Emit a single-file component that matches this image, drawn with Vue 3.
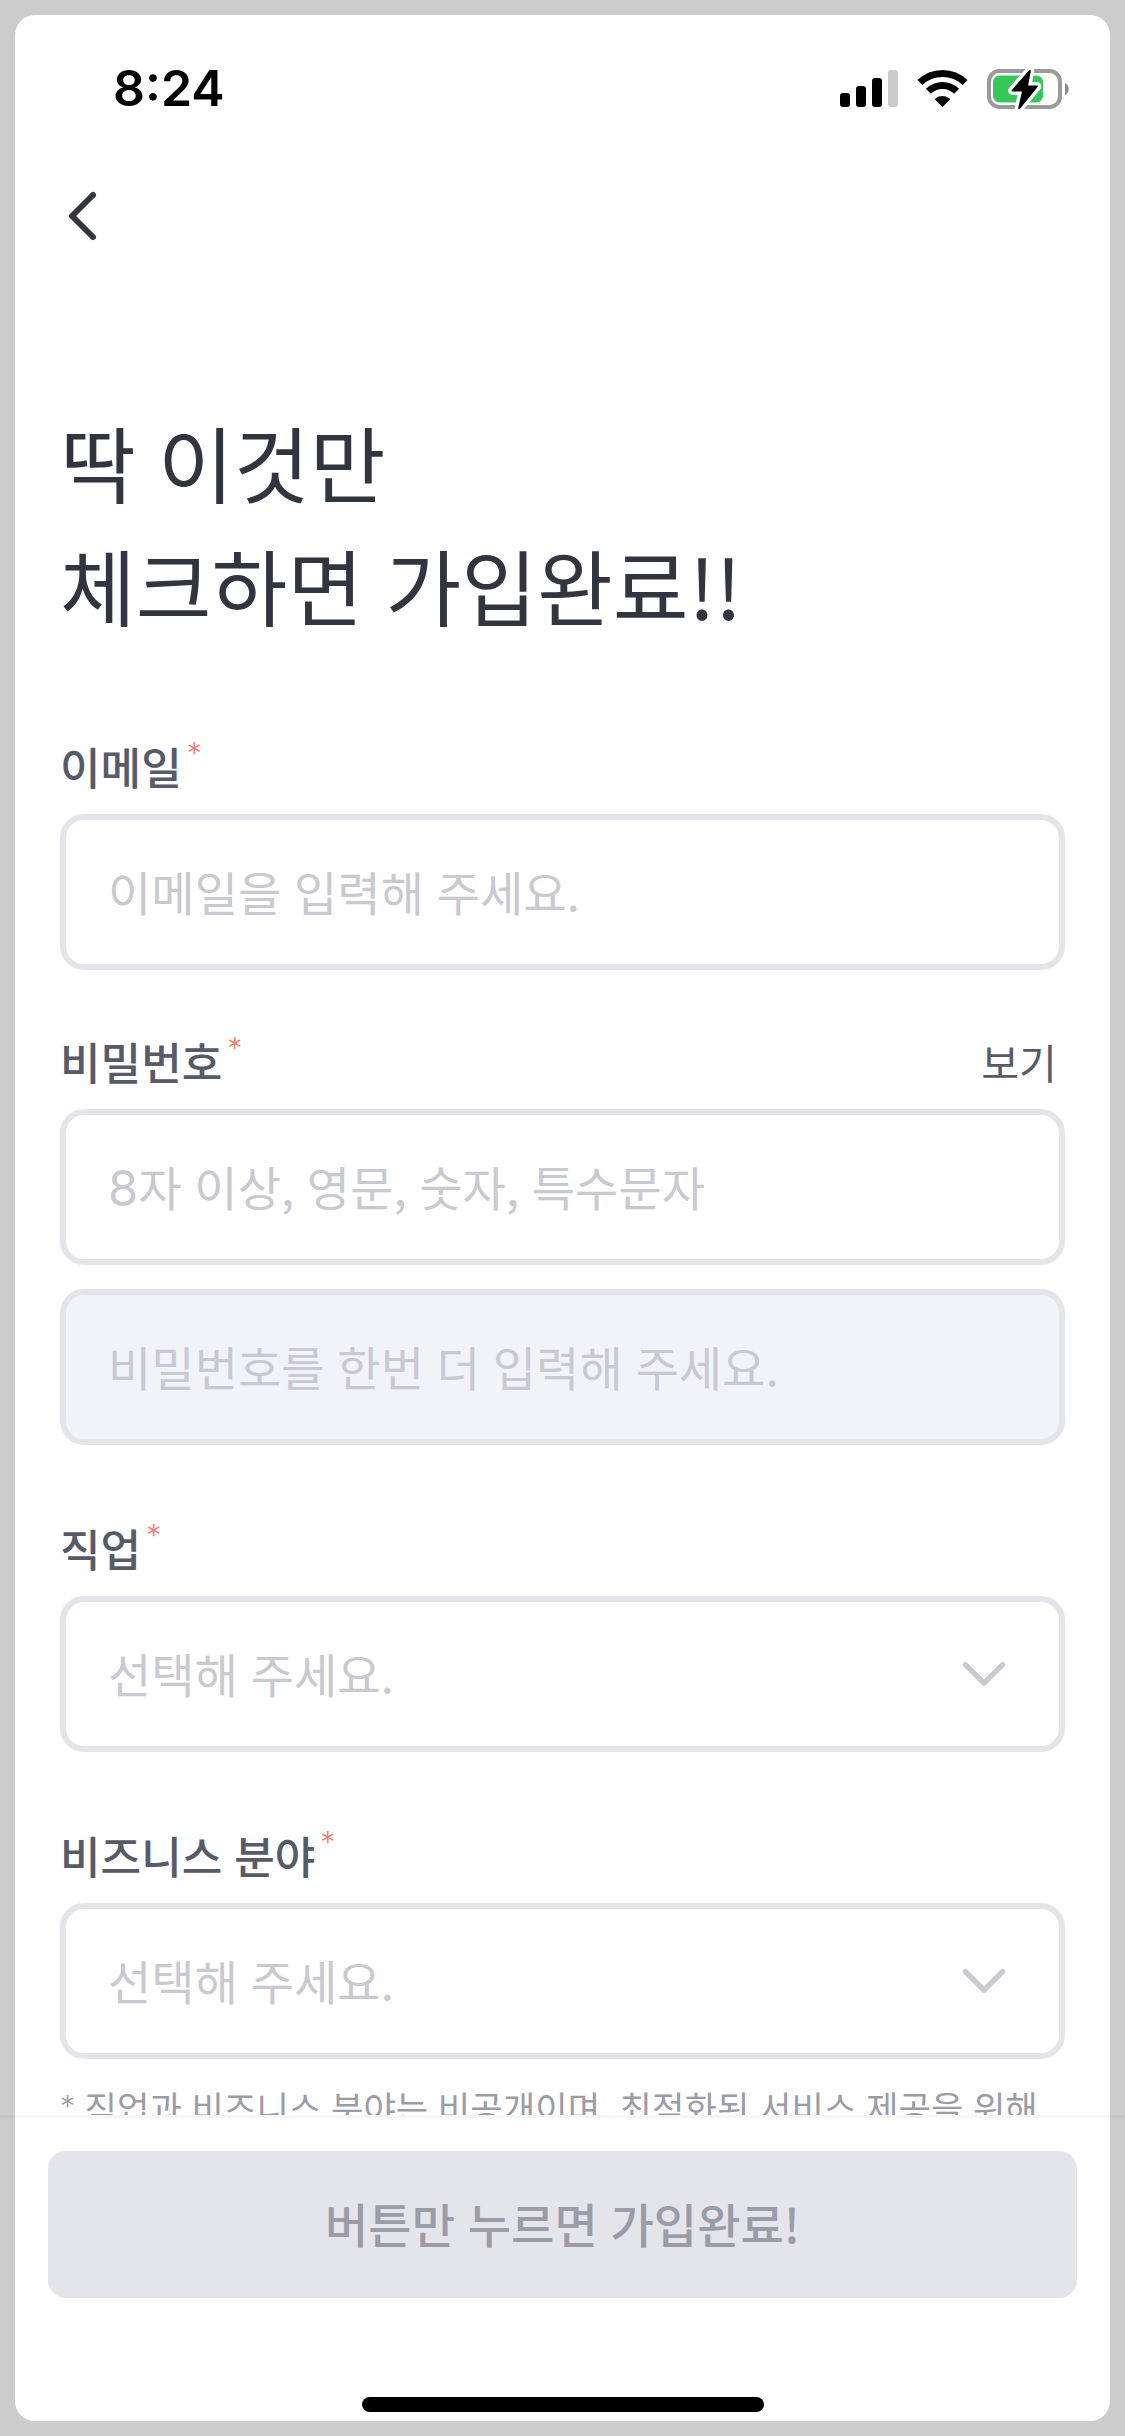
<script setup>
const fields = [
  { label: '이메일', boxes: [{ hint: '이메일을 입력해 주세요.' }] },
  {
    label: '비밀번호',
    action: '보기',
    boxes: [
      { lead: '8', hint: '자 이상, 영문, 숫자, 특수문자' },
      { hint: '비밀번호를 한번 더 입력해 주세요.', disabled: true },
    ],
  },
  { label: '직업', boxes: [{ hint: '선택해 주세요.', select: true }] },
  { label: '비즈니스 분야', boxes: [{ hint: '선택해 주세요.', select: true }] },
]
</script>

<template>
  <div class="page">
    <main class="screen">
      <header class="status">
        <span class="time">8:24</span>
        <div class="indicators">
          <svg width="58" height="40" viewBox="0 0 58 40">
            <rect x="0" y="25" width="10" height="14" rx="3" />
            <rect x="16" y="18" width="10" height="21" rx="3" />
            <rect x="32" y="10" width="10" height="29" rx="3" />
            <rect x="48" y="2" width="10" height="37" rx="3" fill="#cbcbcb" />
          </svg>
          <svg width="51" height="40" viewBox="0 0 51 40">
            <g fill="none" stroke="#000" stroke-width="7">
              <path d="M2.9 14.6A32.5 32.5 0 0 1 48.1 14.6" />
              <path d="M11.4 23.2A20 20 0 0 1 39.6 23.2" />
            </g>
            <path d="M25.5 39 18.2 31.8Q17.6 31 18.4 30.4Q25.5 25.6 32.6 30.4Q33.4 31 32.8 31.8Z" />
          </svg>
          <svg width="83" height="44" viewBox="0 0 83 44">
            <rect x="2" y="3" width="71" height="36" rx="10.5" fill="#fff" stroke="#9b9b9b" stroke-width="4" />
            <path d="M78 15C83 17 83 25 78 27Z" fill="#8c8c8c" />
            <rect x="6" y="7.5" width="50" height="27" rx="6.5" fill="#34c759" />
            <g stroke-linejoin="round">
              <path class="bolt-halo" d="M42.8 3 25.6 22.6H36.2L32.2 40 49.8 18.4H39.9Z" />
              <path class="bolt" d="M42.8 3 25.6 22.6H36.2L32.2 40 49.8 18.4H39.9Z" />
            </g>
          </svg>
        </div>
      </header>

      <nav class="nav">
        <svg width="32" height="54" viewBox="0 0 32 54">
          <path d="M27 6 6 27 27 48" fill="none" stroke="#31353f" stroke-width="6" stroke-linecap="round" stroke-linejoin="round" />
        </svg>
      </nav>

      <section class="content">
        <h1 class="title">딱 이것만<br />체크하면 가입완료!!</h1>

        <div v-for="field in fields" :key="field.label" class="field">
          <div class="field-head">
            <span class="label">{{ field.label }}</span>
            <span class="star">*</span>
            <span v-if="field.action" class="action">{{ field.action }}</span>
          </div>
          <div class="boxes">
            <div v-for="box in field.boxes" :key="box.hint" class="box" :class="{ disabled: box.disabled }">
              <span class="hint"><span v-if="box.lead" class="digit">{{ box.lead }}</span>{{ box.hint }}</span>
              <svg v-if="box.select" width="46" height="28" viewBox="0 0 46 28">
                <path d="M4.4 4.6 23 23.2 41.6 4.6" fill="none" stroke="#c9c9d1" stroke-width="5.4" stroke-linecap="round" stroke-linejoin="round" />
              </svg>
            </div>
          </div>
        </div>

        <p class="note"><span class="note-star">*</span> 직업과 비즈니스 분야는 비공개이며, 최적화된 서비스 제공을 위해</p>
      </section>

      <footer class="footer">
        <div class="divider"></div>
        <div class="submit">버튼만 누르면 가입완료!</div>
        <div class="home"></div>
      </footer>
    </main>
  </div>
</template>

<style>
body {
  margin: 0;
  background: #ccc;
}
</style>

<style scoped>
.page {
  box-sizing: border-box;
  width: 1125px;
  height: 2436px;
  padding: 15px;
  background: #ccc;
  overflow: hidden;
  font-family: 'Noto Sans CJK KR', 'Noto Sans', sans-serif;
}

.page svg {
  display: block;
  flex: none;
}

.screen {
  display: flex;
  flex-direction: column;
  height: 2406px;
  border-radius: 20px;
  background: #fff;
}

.status {
  display: flex;
  flex: none;
  justify-content: space-between;
  height: 147px;
  padding: 0 40px 0 98px;
}

.time {
  margin-top: 43px;
  font: 600 50px/60px Inter, sans-serif;
  color: #000;
}

.indicators {
  display: flex;
  align-items: flex-start;
  gap: 19px;
  margin-top: 53px;
}

.bolt-halo {
  fill: #fff;
  stroke: #fff;
  stroke-width: 9px;
}

.bolt {
  fill: #000;
  stroke: #000;
  stroke-width: 2px;
}

.nav {
  flex: none;
  height: 210px;
  padding: 27px 0 0 51px;
  box-sizing: border-box;
}

.content {
  flex: 1;
  min-height: 0;
  overflow: hidden;
  padding: 28px 45px 0;
}

.title {
  margin: 0 0 87px;
  font-size: 82.4px;
  font-weight: 400;
  line-height: 123px;
  word-spacing: 0.046em;
  color: #31353f;
}

.field {
  margin-bottom: 70px;
}

.field:nth-of-type(1) {
  margin-bottom: 58px;
}

.field:last-of-type {
  margin-bottom: 21px;
}

.field-head {
  display: flex;
  align-items: center;
  height: 66px;
  margin-bottom: 15px;
  line-height: 66px;
  color: #575a68;
}

.label {
  font-size: 44.1px;
  font-weight: 500;
  word-spacing: 0.046em;
}

.star {
  margin: -26px 0 0 5px;
  font-family: Inter, sans-serif;
  font-size: 30px;
  font-weight: 300;
  color: #f0816f;
}

.action {
  margin: 0 8px 0 auto;
  font-size: 41.2px;
}

.boxes {
  display: flex;
  flex-direction: column;
  gap: 24px;
}

.box {
  box-sizing: border-box;
  display: flex;
  align-items: center;
  justify-content: space-between;
  height: 156px;
  padding: 0 52px 0 42px;
  border: 6px solid #e4e5eb;
  border-radius: 24px;
  background: #fff;
}

.box.disabled {
  background: #f1f3f8;
}

.hint {
  padding-bottom: 3px;
  font-size: 47.1px;
  line-height: 72px;
  word-spacing: 0.046em;
  color: #c9c9d1;
}

.digit {
  font-family: Inter, sans-serif;
  font-size: 49px;
  line-height: 1;
}

.note {
  margin: 0;
  font-size: 35.3px;
  line-height: 54px;
  white-space: nowrap;
  word-spacing: 0.046em;
  color: #9b9ca7;
}

.note-star {
  font-family: Inter, sans-serif;
  font-size: 30px;
  font-weight: 300;
  line-height: 1;
  vertical-align: 5px;
}

.footer {
  display: flex;
  flex: none;
  flex-direction: column;
  align-items: center;
  height: 306px;
}

.divider {
  align-self: stretch;
  height: 3px;
  margin: 0 -15px;
  background: rgba(0, 0, 0, 0.035);
}

.submit {
  box-sizing: border-box;
  width: 1029px;
  height: 147px;
  margin-top: 33px;
  padding-bottom: 4px;
  border-radius: 18px;
  background: #e4e5eb;
  font-size: 47.1px;
  font-weight: 500;
  line-height: 143px;
  text-align: center;
  word-spacing: 0.046em;
  color: #9b9ca7;
}

.home {
  width: 402px;
  height: 15px;
  margin-top: 99px;
  border-radius: 8px;
  background: #000;
}
</style>
